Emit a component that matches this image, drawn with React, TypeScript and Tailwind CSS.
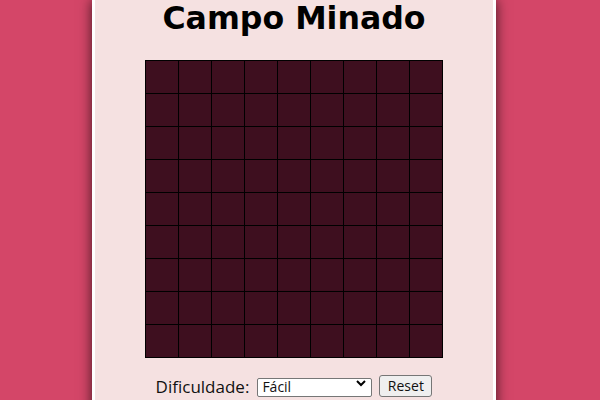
import React from "react";

const ROWS = 9;
const COLS = 9;

function Board() {
  const cells = Array.from({length: ROWS * COLS}, (_, i) => i);
  return (
    <div className="grid grid-cols-[repeat(9,32px)] gap-px bg-black p-px w-fit mx-auto">
      {cells.map((i) => (
        <div key={i} className="w-8 h-8 bg-[#3e0f1f]" />
      ))}
    </div>
  );
}

function Controls() {
  return (
    <div className="flex items-center justify-center gap-[7px] mt-[16px] font-['Open_Sans',sans-serif]">
      <label className="text-[17px] text-[#111] leading-none mr-[1px]">Dificuldade:</label>
      <div className="relative">
        <select className="appearance-none w-[115px] h-[19px] bg-white border border-[#767676] rounded-[2px] pl-[4px] text-[14px] leading-none text-[#111] font-['Open_Sans',sans-serif] outline-none">
          <option>Fácil</option>
          <option>Médio</option>
          <option>Difícil</option>
        </select>
        <svg className="absolute right-[6px] top-[6px] pointer-events-none" width="10" height="7" viewBox="0 0 10 7">
          <path d="M1 1 L5 5 L9 1" fill="none" stroke="#000" strokeWidth="2" />
        </svg>
      </div>
      <button className="h-[22px] w-[53px] bg-[#efefef] border border-[#767676] rounded-[3px] text-[14px] leading-none text-[#111] font-['Open_Sans',sans-serif]">
        Reset
      </button>
    </div>
  );
}

export default function App() {
  return (
    <div className="w-[600px] h-[400px] overflow-hidden bg-[#d44668]">
      <div className="ml-[92px] w-[404px] h-[420px] bg-[#f5e1e1] border-x-[3px] border-white shadow-[0_0_12px_rgba(0,0,0,0.7)]">
        <h1 className="text-center font-['DejaVu_Sans',sans-serif] font-bold text-[31.6px] leading-[37px] text-black">
          Campo Minado
        </h1>
        <div className="mt-[23px]">
          <Board />
        </div>
        <Controls />
      </div>
    </div>
  );
}
